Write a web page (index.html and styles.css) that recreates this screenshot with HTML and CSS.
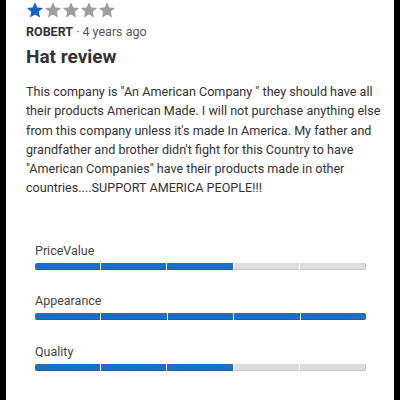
FILE: index.html
```html
<!DOCTYPE html>
<html lang="en">
<head>
    <meta charset="UTF-8">
    <meta name="viewport" content="width=device-width, initial-scale=1.0">
    <title>Review</title>
    <link rel="stylesheet" href="styles.css">
</head>
<body>
    <div class="review">
        <div class="stars">
            <svg class="star on" viewBox="0 0 24 24"><path d="M12 1.5l3.1 7.1 7.7.7-5.8 5.1 1.7 7.6L12 18l-6.7 4 1.7-7.6-5.8-5.1 7.7-.7z"/></svg>
            <svg class="star" viewBox="0 0 24 24"><path d="M12 1.5l3.1 7.1 7.7.7-5.8 5.1 1.7 7.6L12 18l-6.7 4 1.7-7.6-5.8-5.1 7.7-.7z"/></svg>
            <svg class="star" viewBox="0 0 24 24"><path d="M12 1.5l3.1 7.1 7.7.7-5.8 5.1 1.7 7.6L12 18l-6.7 4 1.7-7.6-5.8-5.1 7.7-.7z"/></svg>
            <svg class="star" viewBox="0 0 24 24"><path d="M12 1.5l3.1 7.1 7.7.7-5.8 5.1 1.7 7.6L12 18l-6.7 4 1.7-7.6-5.8-5.1 7.7-.7z"/></svg>
            <svg class="star" viewBox="0 0 24 24"><path d="M12 1.5l3.1 7.1 7.7.7-5.8 5.1 1.7 7.6L12 18l-6.7 4 1.7-7.6-5.8-5.1 7.7-.7z"/></svg>
        </div>
        <div class="meta"><span class="author">ROBERT</span> · 4 years ago</div>
        <h2 class="title">Hat review</h2>
        <p class="text">This company is "An American Company " they should have all their products American Made. I will not purchase anything else from this company unless it's made In America. My father and grandfather and brother didn't fight for this Country to have "American Companies" have their products made in other countries....SUPPORT AMERICA PEOPLE!!!</p>

        <div class="ratings">
            <div class="rating">
                <div class="rating__label">PriceValue</div>
                <div class="bar">
                    <span class="seg on"></span><span class="seg on"></span><span class="seg on"></span><span class="seg"></span><span class="seg"></span>
                </div>
            </div>
            <div class="rating">
                <div class="rating__label">Appearance</div>
                <div class="bar">
                    <span class="seg on"></span><span class="seg on"></span><span class="seg on"></span><span class="seg on"></span><span class="seg on"></span>
                </div>
            </div>
            <div class="rating">
                <div class="rating__label">Quality</div>
                <div class="bar">
                    <span class="seg on"></span><span class="seg on"></span><span class="seg on"></span><span class="seg"></span><span class="seg"></span>
                </div>
            </div>
        </div>
    </div>
</body>
</html>
```
FILE: styles.css
```css
* {
    margin: 0px;
    box-sizing: border-box;
}

body {
    background-color: #000;
    font-family: Roboto, "Liberation Sans", sans-serif;
    color: #333;
}
.review {
    margin: 0 6px;
    height: 400px;
    background-color: #fff;
    padding: 0 10px 0 20px;
    overflow: hidden;
}
.stars {
    display: flex;
    height: 20px;
    align-items: center;
}
.star {
    width: 18px;
    height: 18px;
    fill: #9e9e9e;
}
.star.on {
    fill: #1565c0;
}
.meta {
    margin-top: 3px;
    font-size: 12.5px;
    color: #555;
    line-height: 18px;
}
.author {
    font-weight: bold;
    color: #333;
}
.title {
    margin-top: 4px;
    font-size: 19px;
    line-height: 24px;
    color: #333;
}
.text {
    margin-top: 13px;
    font-size: 12.6px;
    line-height: 19.3px;
    color: #333;
}
.ratings {
    padding: 0 18px 0 9px;
    margin-top: 45px;
}
.rating {
    margin-bottom: 23.5px;
}
.rating__label {
    font-size: 12.5px;
    line-height: 16px;
    color: #444;
}
.bar {
    margin-top: 4px;
    display: flex;
    gap: 1px;
    height: 7px;
}
.seg {
    flex: 1;
    background-color: #ddd;
    border-bottom: 1px solid #c8c8c8;
}
.seg.on {
    background-color: #1f6fc0;
    border-bottom-color: #1a62ad;
}
.seg:first-child {
    border-radius: 2px 0 0 2px;
}
.seg:last-child {
    border-radius: 0 2px 2px 0;
    border-right: 1px solid #bbb;
}
.seg.on:last-child {
    border-right: none;
}
```
